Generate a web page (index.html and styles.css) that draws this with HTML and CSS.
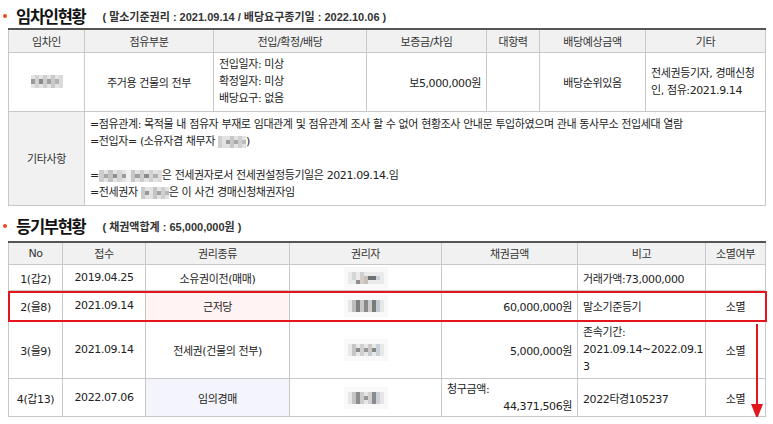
FILE: index.html
```html
<!DOCTYPE html>
<html lang="ko">
<head>
<meta charset="utf-8">
<title>임차인현황 / 등기부현황</title>
<link rel="stylesheet" href="styles.css">
</head>
<body>
<section class="sec sec-tenant">
  <h2 class="title"><span class="dot"></span><span class="ttl">임차인현황</span><span class="sub">( 말소기준권리 : 2021.09.14 / 배당요구종기일 : 2022.10.06 )</span></h2>
  <table class="grid t1">
    <colgroup>
      <col style="width:76px"><col style="width:129px"><col style="width:153px"><col style="width:120px"><col style="width:53px"><col style="width:106px"><col style="width:120px">
    </colgroup>
    <thead>
      <tr class="hrow"><th>임차인</th><th>점유부분</th><th>전입/확정/배당</th><th>보증금/차임</th><th>대항력</th><th>배당예상금액</th><th>기타</th></tr>
    </thead>
    <tbody>
      <tr class="t1r1">
        <td><svg class="mosaic m1" width="32" height="13" viewBox="0 0 8 3" preserveAspectRatio="none" shape-rendering="crispEdges"><rect x="0" y="0" width="8" height="3" fill="#e4e4e4"/><rect x="0" y="1" width="1" height="1" fill="#9a9a9a"/><rect x="1" y="0" width="1" height="3" fill="#d2d2d2"/><rect x="2" y="1" width="1" height="1" fill="#8a8a8a"/><rect x="3" y="0" width="1" height="3" fill="#cfcfcf"/><rect x="4" y="1" width="1" height="1" fill="#a0a0a0"/><rect x="5" y="0" width="1" height="3" fill="#c9c9c9"/><rect x="6" y="1" width="1" height="1" fill="#b2b2b2"/><rect x="7" y="0" width="1" height="3" fill="#dadada"/></svg></td>
        <td>주거용 건물의 전부</td>
        <td class="left lines">전입일자: 미상<br>확정일자: 미상<br>배당요구: 없음</td>
        <td class="right">보5,000,000원</td>
        <td></td>
        <td>배당순위있음</td>
        <td class="left lines">전세권등기자, 경매신청인, 점유:2021.9.14</td>
      </tr>
      <tr class="t1r2">
        <th>기타사항</th>
        <td colspan="6" class="note">
          <div>=점유관계: 목적물 내 점유자 부재로 임대관계 및 점유관계 조사 할 수 없어 현황조사 안내문 투입하였으며 관내 동사무소 전입세대 열람</div>
          <div>=전입자= (소유자겸 채무자 <svg class="mosaic" width="28" height="12" viewBox="0 0 7 3" preserveAspectRatio="none" shape-rendering="crispEdges"><rect x="0" y="0" width="7" height="3" fill="#e2e2e2"/><rect x="0" y="0" width="1" height="3" fill="#cfcfcf"/><rect x="2" y="1" width="1" height="1" fill="#9c9c9c"/><rect x="3" y="0" width="1" height="3" fill="#c6c6c6"/><rect x="4" y="1" width="1" height="1" fill="#a8a8a8"/><rect x="5" y="0" width="1" height="3" fill="#d0d0d0"/><rect x="6" y="1" width="1" height="1" fill="#bdbdbd"/></svg>)</div>
          <div class="blank"></div>
          <div>=<svg class="mosaic" width="63" height="12" viewBox="0 0 14 3" preserveAspectRatio="none" shape-rendering="crispEdges"><rect x="0" y="0" width="14" height="3" fill="#e3e3e3"/><rect x="0" y="0" width="1" height="3" fill="#cdcdcd"/><rect x="1" y="1" width="1" height="1" fill="#a5a5a5"/><rect x="2" y="0" width="1" height="3" fill="#c2c2c2"/><rect x="3" y="1" width="1" height="1" fill="#8f8f8f"/><rect x="4" y="0" width="1" height="3" fill="#d4d4d4"/><rect x="5" y="1" width="1" height="1" fill="#9b9b9b"/><rect x="6" y="0" width="1" height="3" fill="#f0f0f0"/><rect x="7" y="0" width="1" height="3" fill="#c8c8c8"/><rect x="8" y="1" width="1" height="1" fill="#a0a0a0"/><rect x="9" y="0" width="1" height="3" fill="#cccccc"/><rect x="10" y="1" width="1" height="1" fill="#8c8c8c"/><rect x="11" y="0" width="1" height="3" fill="#d2d2d2"/><rect x="12" y="1" width="1" height="1" fill="#b0b0b0"/><rect x="13" y="0" width="1" height="3" fill="#dcdcdc"/></svg>은 전세권자로서 전세권설정등기일은 2021.09.14.임</div>
          <div>=전세권자 <svg class="mosaic" width="28" height="12" viewBox="0 0 7 3" preserveAspectRatio="none" shape-rendering="crispEdges"><rect x="0" y="0" width="7" height="3" fill="#e2e2e2"/><rect x="0" y="0" width="1" height="3" fill="#cbcbcb"/><rect x="1" y="1" width="1" height="1" fill="#999999"/><rect x="3" y="0" width="1" height="3" fill="#c4c4c4"/><rect x="4" y="1" width="1" height="1" fill="#a2a2a2"/><rect x="5" y="0" width="1" height="3" fill="#cecece"/><rect x="6" y="1" width="1" height="1" fill="#b8b8b8"/></svg>은 이 사건 경매신청채권자임</div>
        </td>
      </tr>
    </tbody>
  </table>
</section>

<section class="sec sec-reg">
  <h2 class="title"><span class="dot"></span><span class="ttl">등기부현황</span><span class="sub">( 채권액합계 : 65,000,000원 )</span></h2>
  <div class="reg-wrap">
    <table class="grid t2">
      <colgroup>
        <col style="width:54px"><col style="width:83px"><col style="width:144px"><col style="width:152px"><col style="width:136px"><col style="width:128px"><col style="width:60px">
      </colgroup>
      <thead>
        <tr class="hrow"><th>No</th><th>접수</th><th>권리종류</th><th>권리자</th><th>채권금액</th><th>비고</th><th>소멸여부</th></tr>
      </thead>
      <tbody>
        <tr class="t2r1">
          <td>1(갑2)</td><td>2019.04.25</td><td>소유권이전(매매)</td>
          <td><span class="pic"><svg class="mosaic" width="36" height="12" viewBox="0 0 9 3" preserveAspectRatio="none" shape-rendering="crispEdges"><rect x="0" y="0" width="9" height="3" fill="#eaeaea"/><rect x="1" y="0" width="1" height="2" fill="#d6d6d6"/><rect x="2" y="2" width="1" height="1" fill="#8e8e8e"/><rect x="3" y="0" width="1" height="3" fill="#cfcfcf"/><rect x="4" y="1" width="1" height="2" fill="#c8c0b8"/><rect x="5" y="1" width="2" height="1" fill="#6f6f6f"/><rect x="7" y="1" width="1" height="1" fill="#c9d2dc"/></svg></span></td>
          <td></td><td class="left">거래가액:73,000,000</td><td></td>
        </tr>
        <tr class="t2r2">
          <td>2(을8)</td><td>2021.09.14</td><td class="pink">근저당</td>
          <td><span class="pic"><svg class="mosaic" width="36" height="12" viewBox="0 0 9 3" preserveAspectRatio="none" shape-rendering="crispEdges"><rect x="0" y="0" width="9" height="3" fill="#e6e6e6"/><rect x="1" y="0" width="1" height="3" fill="#bdbdbd"/><rect x="2" y="0" width="1" height="3" fill="#7f7f7f"/><rect x="3" y="0" width="1" height="3" fill="#c8c8c8"/><rect x="4" y="0" width="1" height="3" fill="#8a8a8a"/><rect x="5" y="0" width="1" height="3" fill="#cdcdcd"/><rect x="6" y="0" width="1" height="3" fill="#7a7a7a"/><rect x="7" y="0" width="1" height="3" fill="#c2cad4"/></svg></span></td>
          <td class="right">60,000,000원</td><td class="left">말소기준등기</td><td>소멸</td>
        </tr>
        <tr class="t2r3">
          <td>3(을9)</td><td>2021.09.14</td><td>전세권(건물의 전부)</td>
          <td><span class="pic"><svg class="mosaic" width="36" height="12" viewBox="0 0 9 3" preserveAspectRatio="none" shape-rendering="crispEdges"><rect x="0" y="0" width="9" height="3" fill="#e8e8e8"/><rect x="1" y="0" width="1" height="3" fill="#c6c6c6"/><rect x="2" y="1" width="1" height="1" fill="#8c8c8c"/><rect x="3" y="0" width="1" height="3" fill="#d0d0d0"/><rect x="4" y="1" width="1" height="1" fill="#979797"/><rect x="5" y="0" width="1" height="3" fill="#cacaca"/><rect x="6" y="1" width="1" height="1" fill="#858585"/><rect x="7" y="0" width="1" height="3" fill="#c9d1da"/></svg></span></td>
          <td class="right">5,000,000원</td><td class="left lines">존속기간:<br>2021.09.14~2022.09.1<br>3</td><td>소멸</td>
        </tr>
        <tr class="t2r4">
          <td>4(갑13)</td><td>2022.07.06</td><td class="lav">임의경매</td>
          <td><span class="pic"><svg class="mosaic" width="36" height="12" viewBox="0 0 9 3" preserveAspectRatio="none" shape-rendering="crispEdges"><rect x="0" y="0" width="9" height="3" fill="#e6e6e6"/><rect x="1" y="0" width="1" height="3" fill="#c4c4c4"/><rect x="2" y="0" width="1" height="3" fill="#8d8d8d"/><rect x="3" y="0" width="1" height="3" fill="#cdcdcd"/><rect x="4" y="1" width="1" height="1" fill="#959595"/><rect x="5" y="0" width="1" height="3" fill="#d0d0d0"/><rect x="6" y="0" width="1" height="3" fill="#8b8b8b"/><rect x="7" y="0" width="1" height="3" fill="#cad1d9"/></svg></span></td>
          <td class="amt lines"><div class="lbl">청구금액:</div><div class="right">44,371,506원</div></td>
          <td class="left">2022타경105237</td><td>소멸</td>
        </tr>
      </tbody>
    </table>
    <div class="hl-box"></div>
    <svg class="arrow" width="14" height="95" viewBox="0 0 14 95"><line x1="7" y1="0" x2="7" y2="82" stroke="#e3161e" stroke-width="2"/><polygon points="1,80 13,80 7,95" fill="#e3161e"/></svg>
  </div>
</section>
</body>
</html>
```

FILE: styles.css
```css
* { box-sizing: border-box; }

html, body { background: #fff; }

body {
  margin: 0;
  padding: 0 8px;
  font-family: "DejaVu Sans", "Noto Sans CJK KR", sans-serif;
  font-size: 11px;
  letter-spacing: -0.4px;
  color: #222;
}

.title {
  margin: 0 0 0 -5px;
  display: flex;
  align-items: center;
  height: 28px;
  padding-top: 3px;
  font-weight: bold;
  color: #111;
}

.sec-reg .title {
  height: 35px;
  padding-top: 6px;
}

.dot {
  width: 4px;
  height: 4px;
  border-radius: 50%;
  background: #ec4b1f;
  margin-right: 9px;
  flex: none;
}

.ttl {
  font-family: "Noto Sans CJK KR", sans-serif;
  font-size: 16.5px;
  letter-spacing: -1.3px;
  line-height: 20px;
}

.sub {
  margin-left: 17px;
  font-family: "Liberation Sans", "Noto Sans CJK KR", sans-serif;
  font-size: 11px;
  letter-spacing: 0;
  color: #333;
  font-weight: bold;
}

.grid {
  width: 757px;
  border-collapse: collapse;
  table-layout: fixed;
  border-top: 2px solid #555;
}

.grid th,
.grid td {
  border: 1px solid #c8c8c8;
  padding: 0 5px;
  text-align: center;
  vertical-align: middle;
  font-weight: normal;
  color: #222;
}

.grid thead th {
  background: #f1f1f1;
  color: #333;
  height: 23px;
}

.grid .left { text-align: left; }
.grid .right { text-align: right; }
.grid .lines { line-height: 17px; }

.t1r1 td { height: 59px; }
.t1r2 th { background: #f1f1f1; color: #333; }
.t1r2 td.note {
  text-align: left;
  padding: 4px 5px 4px 5px;
  line-height: 17px;
  height: 92px;
}
.note .blank { height: 17px; }

.mosaic {
  display: inline-block;
  vertical-align: middle;
  filter: blur(0.4px);
}

.t2r1 td { height: 26px; }
.t2r2 td { height: 30px; }
.t2r3 td { height: 58px; }
.t2r4 td { height: 38px; }

.pink { background: #fff3f3; }
.lav { background: #f4f4fd; }

.pic {
  display: inline-flex;
  align-items: center;
  justify-content: center;
  width: 44px;
  height: 22px;
  background: #f9f9f9;
}

.amt .lbl { text-align: left; }

.reg-wrap { position: relative; width: 757px; }

.hl-box {
  position: absolute;
  left: 0;
  top: 50px;
  width: 759px;
  height: 31px;
  border: 2px solid #e3161e;
  pointer-events: none;
}

.arrow {
  position: absolute;
  left: 742px;
  top: 83px;
}
```
